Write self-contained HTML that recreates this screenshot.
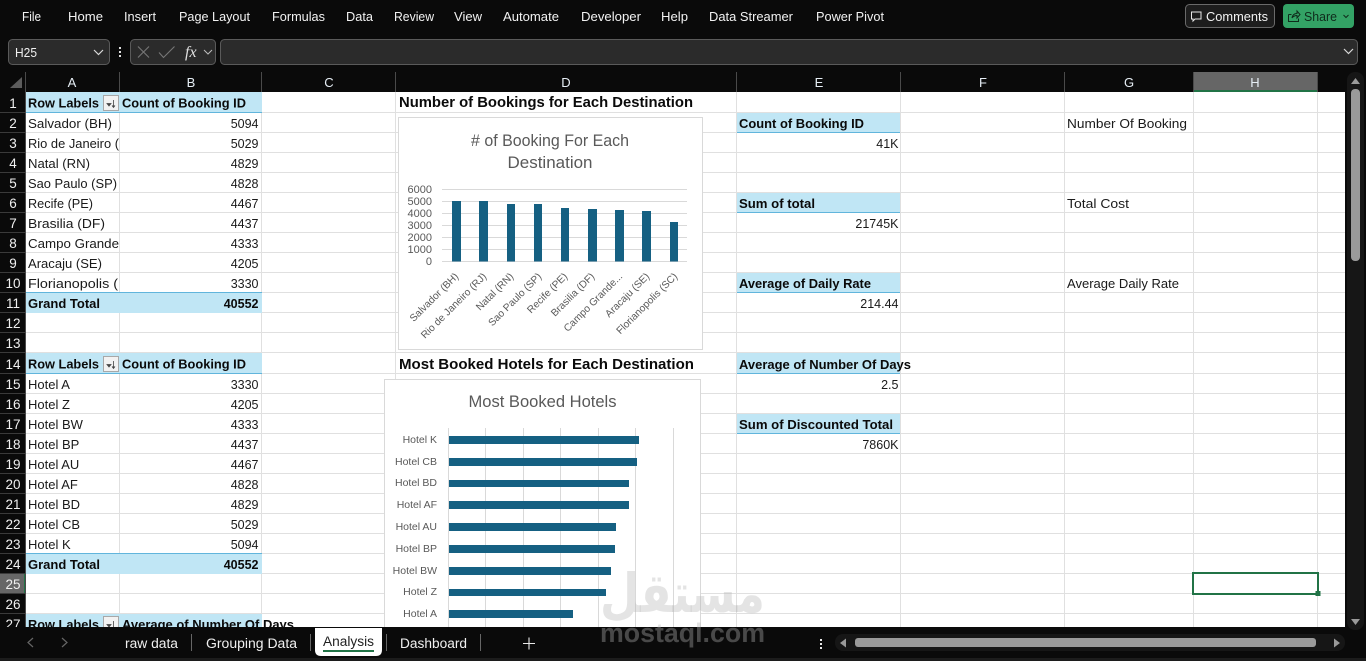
<!DOCTYPE html>
<html><head><meta charset="utf-8"><title>Analysis</title>
<style>
html,body{margin:0;padding:0;background:#0a0a0a;overflow:hidden;width:1366px;height:661px}
svg{display:block}
text{font-family:"Liberation Sans",sans-serif;white-space:pre}
.m{font-size:13px;fill:#f2f2f2}
.h{font-size:13px;fill:#e6eef5;text-anchor:middle}
.r{font-size:13.5px;fill:#f0f0f0;text-anchor:middle}
.c{font-size:13px;fill:#1a1a1a}
.n{font-size:12.5px;fill:#1a1a1a;text-anchor:end}
.b{font-size:13px;font-weight:bold;fill:#0a0a0a}
.be{font-size:12.5px;font-weight:bold;fill:#0a0a0a;text-anchor:end}
.t{font-size:14.5px;font-weight:bold;fill:#0a0a0a}
.ct{font-size:16.5px;fill:#595959;text-anchor:middle}
.ax{font-size:11px;fill:#595959;text-anchor:end}
.rl{font-size:10.2px;fill:#595959;text-anchor:end}
.hl{font-size:10.5px;fill:#595959;text-anchor:end}
.tab{font-size:13.5px;fill:#f0f0f0}
</style></head><body>
<svg width="1366" height="661" viewBox="0 0 1366 661" xmlns="http://www.w3.org/2000/svg">
<rect width="1366" height="661" fill="#0a0a0a"/>

<!-- ribbon tabs -->
<text class="m" x="22" y="21" textLength="19" lengthAdjust="spacingAndGlyphs">File</text>
<text class="m" x="68" y="21" textLength="35" lengthAdjust="spacingAndGlyphs">Home</text>
<text class="m" x="124" y="21" textLength="32" lengthAdjust="spacingAndGlyphs">Insert</text>
<text class="m" x="179" y="21" textLength="71" lengthAdjust="spacingAndGlyphs">Page Layout</text>
<text class="m" x="272" y="21" textLength="53" lengthAdjust="spacingAndGlyphs">Formulas</text>
<text class="m" x="346" y="21" textLength="27" lengthAdjust="spacingAndGlyphs">Data</text>
<text class="m" x="394" y="21" textLength="40" lengthAdjust="spacingAndGlyphs">Review</text>
<text class="m" x="454" y="21" textLength="28" lengthAdjust="spacingAndGlyphs">View</text>
<text class="m" x="503" y="21" textLength="56" lengthAdjust="spacingAndGlyphs">Automate</text>
<text class="m" x="581" y="21" textLength="60" lengthAdjust="spacingAndGlyphs">Developer</text>
<text class="m" x="661" y="21" textLength="27" lengthAdjust="spacingAndGlyphs">Help</text>
<text class="m" x="709" y="21" textLength="84" lengthAdjust="spacingAndGlyphs">Data Streamer</text>
<text class="m" x="816" y="21" textLength="68" lengthAdjust="spacingAndGlyphs">Power Pivot</text>

<!-- comments / share -->
<rect x="1185.500" y="4.500" width="89" height="23" rx="4" fill="#1d1d1d" stroke="#6a6a6a"/>
<path d="M1191.500 12h9.500v7h-6l-2 2v-2h-1.500z" fill="none" stroke="#e8e8e8" stroke-width="1"/>
<text class="m" x="1206" y="21" textLength="62" lengthAdjust="spacingAndGlyphs">Comments</text>
<rect x="1283" y="4" width="71" height="24" rx="4" fill="#33a265"/>
<path d="M1288.500 14.500v7h10v-3M1288.500 14.500h3M1292 18c.5-3 2.500-4.500 5-4.500v-2.500l3 3.500-3 3.500v-2.500c-2 0-3.500.5-5 2.500z" fill="none" stroke="#0f2b1b" stroke-width="1"/>
<text x="1304" y="21" style="font-size:13px;fill:#0f2b1b" textLength="33" lengthAdjust="spacingAndGlyphs">Share</text>
<path d="M1343.500 15l2.500 2.500 2.500-2.500" fill="none" stroke="#0f2b1b" stroke-width="1"/>

<!-- formula bar -->
<rect x="8.500" y="39.500" width="101" height="25" rx="4" fill="#2b2b2b" stroke="#5a5a5a"/>
<text x="15" y="57" style="font-size:13px;fill:#f0f0f0" textLength="22" lengthAdjust="spacingAndGlyphs">H25</text>
<path d="M94 50l4.500 4.500 4.500-4.500" fill="none" stroke="#d8d8d8" stroke-width="1.200"/>
<rect x="119" y="47" width="2" height="2" fill="#e0e0e0"/><rect x="119" y="51" width="2" height="2" fill="#e0e0e0"/><rect x="119" y="55" width="2" height="2" fill="#e0e0e0"/>
<rect x="130.500" y="39.500" width="85" height="25" rx="4" fill="#2b2b2b" stroke="#5a5a5a"/>
<path d="M138 46.500l11 11M149 46.500l-11 11" stroke="#777" stroke-width="1.100" fill="none"/>
<path d="M159 52.500l4.500 5 11-11" stroke="#777" stroke-width="1.100" fill="none"/>
<text x="185" y="57" style="font-family:'Liberation Serif',serif;font-style:italic;font-size:16px;fill:#e0e0e0">fx</text>
<path d="M204 50l4 4 4-4" fill="none" stroke="#bdbdbd" stroke-width="1"/>
<rect x="220.500" y="39.500" width="1137" height="25" rx="4" fill="#2b2b2b" stroke="#5a5a5a"/>
<path d="M1344 49l4.500 4.500 4.500-4.500" fill="none" stroke="#d8d8d8" stroke-width="1.200"/>

<!-- sheet -->
<rect x="26" y="92" width="1319" height="536" fill="#fff"/>

<!-- header selection -->
<rect x="1194" y="72" width="124" height="19" fill="#666"/>
<rect x="1194" y="90" width="124" height="2" fill="#217346"/>
<rect x="0" y="574" width="25" height="20" fill="#666"/>
<rect x="24" y="574" width="2" height="20" fill="#217346"/>

<!-- corner -->
<path d="M22 77v11h-12z" fill="#5c5c5c"/>

<!-- header separators -->
<path d="M25.500 72v556M119.500 72v20M261.500 72v20M395.500 72v20M736.500 72v20M900.500 72v20M1064.500 72v20M1193.500 72v20M1317.500 72v20" stroke="#4a4a4a" fill="none"/>
<path d="M0 112.500h25M0 132.500h25M0 152.500h25M0 172.500h25M0 192.500h25M0 212.500h25M0 232.500h25M0 252.500h25M0 272.500h25M0 292.500h25M0 312.500h25M0 332.500h25M0 352.500h25M0 373.500h25M0 393.500h25M0 413.500h25M0 433.500h25M0 453.500h25M0 473.500h25M0 493.500h25M0 513.500h25M0 533.500h25M0 553.500h25M0 573.500h25M0 593.500h25M0 613.500h25" stroke="#3a3a3a" fill="none"/>

<text class="h" x="72" y="87">A</text><text class="h" x="191" y="87">B</text><text class="h" x="329" y="87">C</text><text class="h" x="566" y="87">D</text><text class="h" x="819" y="87">E</text><text class="h" x="983" y="87">F</text><text class="h" x="1129" y="87">G</text><text class="h" x="1255" y="87">H</text>

<text class="r" x="13" y="108">1</text><text class="r" x="13" y="128">2</text><text class="r" x="13" y="148">3</text><text class="r" x="13" y="168">4</text><text class="r" x="13" y="188">5</text><text class="r" x="13" y="208">6</text><text class="r" x="13" y="228">7</text><text class="r" x="13" y="248">8</text><text class="r" x="13" y="268">9</text><text class="r" x="13" y="288">10</text><text class="r" x="13" y="308">11</text><text class="r" x="13" y="328">12</text><text class="r" x="13" y="348">13</text><text class="r" x="13" y="369">14</text><text class="r" x="13" y="389">15</text><text class="r" x="13" y="409">16</text><text class="r" x="13" y="429">17</text><text class="r" x="13" y="449">18</text><text class="r" x="13" y="469">19</text><text class="r" x="13" y="489">20</text><text class="r" x="13" y="509">21</text><text class="r" x="13" y="529">22</text><text class="r" x="13" y="549">23</text><text class="r" x="13" y="569">24</text><text class="r" x="13" y="589">25</text><text class="r" x="13" y="609">26</text><text class="r" x="13" y="629">27</text>

<!-- grid -->
<path d="M119.500 92v536M261.500 92v536M395.500 92v536M736.500 92v536M900.500 92v536M1064.500 92v536M1193.500 92v536M1317.500 92v536" stroke="#e0e0e0" fill="none"/>
<path d="M26 112.500h1319M26 132.500h1319M26 152.500h1319M26 172.500h1319M26 192.500h1319M26 212.500h1319M26 232.500h1319M26 252.500h1319M26 272.500h1319M26 292.500h1319M26 312.500h1319M26 332.500h1319M26 352.500h1319M26 373.500h1319M26 393.500h1319M26 413.500h1319M26 433.500h1319M26 453.500h1319M26 473.500h1319M26 493.500h1319M26 513.500h1319M26 533.500h1319M26 553.500h1319M26 573.500h1319M26 593.500h1319M26 613.500h1319" stroke="#e0e0e0" fill="none"/>

<!-- fills -->
<g fill="#c0e6f5">
<rect x="26" y="92" width="236" height="20"/>
<rect x="26" y="293" width="236" height="20"/>
<rect x="26" y="353" width="236" height="20"/>
<rect x="26" y="554" width="236" height="20"/>
<rect x="26" y="614" width="236" height="14"/>
<rect x="737" y="113" width="163" height="19"/>
<rect x="737" y="193" width="163" height="19"/>
<rect x="737" y="273" width="163" height="19"/>
<rect x="737" y="353" width="163" height="20"/>
<rect x="737" y="414" width="163" height="19"/>
</g>
<g fill="#61b5dc">
<rect x="26" y="112" width="236" height="1"/>
<rect x="26" y="292" width="236" height="1"/>
<rect x="26" y="373" width="236" height="1"/>
<rect x="26" y="553" width="236" height="1"/>
<rect x="737" y="132" width="163" height="1"/>
<rect x="737" y="212" width="163" height="1"/>
<rect x="737" y="292" width="163" height="1"/>
<rect x="737" y="373" width="163" height="1"/>
<rect x="737" y="433" width="163" height="1"/>
</g>

<!-- pivot 1 -->
<text class="b" x="28" y="107.500" textLength="71" lengthAdjust="spacingAndGlyphs">Row Labels</text>
<rect x="103.500" y="95.500" width="15" height="15" fill="#f2f2f2" stroke="#a8a8a8"/>
<path d="M107 103.500h4l-2 2.500zM113.500 100v7.500M112 105.500l1.500 2 1.500-2" fill="#444" stroke="#444" stroke-width=".8"/>
<text class="b" x="122" y="107.500" textLength="124" lengthAdjust="spacingAndGlyphs">Count of Booking ID</text>
<text class="c" x="28" y="128" textLength="84" lengthAdjust="spacingAndGlyphs">Salvador (BH)</text><text class="n" x="258.500" y="128">5094</text>
<text class="c" x="28" y="148" textLength="91" lengthAdjust="spacingAndGlyphs">Rio de Janeiro (</text><text class="n" x="258.500" y="148">5029</text>
<text class="c" x="28" y="168" textLength="62" lengthAdjust="spacingAndGlyphs">Natal (RN)</text><text class="n" x="258.500" y="168">4829</text>
<text class="c" x="28" y="188" textLength="89" lengthAdjust="spacingAndGlyphs">Sao Paulo (SP)</text><text class="n" x="258.500" y="188">4828</text>
<text class="c" x="28" y="208" textLength="65" lengthAdjust="spacingAndGlyphs">Recife (PE)</text><text class="n" x="258.500" y="208">4467</text>
<text class="c" x="28" y="228" textLength="77" lengthAdjust="spacingAndGlyphs">Brasilia (DF)</text><text class="n" x="258.500" y="228">4437</text>
<text class="c" x="28" y="248" textLength="91" lengthAdjust="spacingAndGlyphs">Campo Grande</text><text class="n" x="258.500" y="248">4333</text>
<text class="c" x="28" y="268" textLength="74" lengthAdjust="spacingAndGlyphs">Aracaju (SE)</text><text class="n" x="258.500" y="268">4205</text>
<text class="c" x="28" y="288" textLength="90" lengthAdjust="spacingAndGlyphs">Florianopolis (</text><text class="n" x="258.500" y="288">3330</text>
<text class="b" x="28" y="308" textLength="72" lengthAdjust="spacingAndGlyphs">Grand Total</text><text class="be" x="258.500" y="308">40552</text>

<!-- pivot 2 -->
<text class="b" x="28" y="368.500" textLength="71" lengthAdjust="spacingAndGlyphs">Row Labels</text>
<rect x="103.500" y="356.500" width="15" height="15" fill="#f2f2f2" stroke="#a8a8a8"/>
<path d="M107 364.500h4l-2 2.500zM113.500 361v7.500M112 366.500l1.500 2 1.500-2" fill="#444" stroke="#444" stroke-width=".8"/>
<text class="b" x="122" y="368.500" textLength="124" lengthAdjust="spacingAndGlyphs">Count of Booking ID</text>
<text class="c" x="28" y="389">Hotel A</text><text class="n" x="258.500" y="389">3330</text>
<text class="c" x="28" y="409">Hotel Z</text><text class="n" x="258.500" y="409">4205</text>
<text class="c" x="28" y="429">Hotel BW</text><text class="n" x="258.500" y="429">4333</text>
<text class="c" x="28" y="449">Hotel BP</text><text class="n" x="258.500" y="449">4437</text>
<text class="c" x="28" y="469">Hotel AU</text><text class="n" x="258.500" y="469">4467</text>
<text class="c" x="28" y="489">Hotel AF</text><text class="n" x="258.500" y="489">4828</text>
<text class="c" x="28" y="509">Hotel BD</text><text class="n" x="258.500" y="509">4829</text>
<text class="c" x="28" y="529">Hotel CB</text><text class="n" x="258.500" y="529">5029</text>
<text class="c" x="28" y="549">Hotel K</text><text class="n" x="258.500" y="549">5094</text>
<text class="b" x="28" y="569" textLength="72" lengthAdjust="spacingAndGlyphs">Grand Total</text><text class="be" x="258.500" y="569">40552</text>

<!-- pivot 3 -->
<text class="b" x="28" y="629" textLength="71" lengthAdjust="spacingAndGlyphs">Row Labels</text>
<rect x="103.500" y="616.500" width="15" height="15" fill="#f2f2f2" stroke="#a8a8a8"/>
<path d="M107 624.500h4l-2 2.500zM113.500 621v7" fill="#444" stroke="#444" stroke-width=".8"/>
<text class="b" x="122" y="629" textLength="172" lengthAdjust="spacingAndGlyphs">Average of Number Of Days</text>

<!-- headings -->
<text class="t" x="399" y="107" textLength="294" lengthAdjust="spacingAndGlyphs">Number of Bookings for Each Destination</text>
<text class="t" x="399" y="369" textLength="295" lengthAdjust="spacingAndGlyphs">Most Booked Hotels for Each Destination</text>

<!-- KPI -->
<text class="b" x="739" y="128" textLength="125" lengthAdjust="spacingAndGlyphs">Count of Booking ID</text><text class="n" x="898.500" y="148">41K</text>
<text class="b" x="739" y="208" textLength="76" lengthAdjust="spacingAndGlyphs">Sum of total</text><text class="n" x="898.500" y="228">21745K</text>
<text class="b" x="739" y="288" textLength="132" lengthAdjust="spacingAndGlyphs">Average of Daily Rate</text><text class="n" x="898.500" y="308">214.44</text>
<text class="b" x="739" y="369" textLength="172" lengthAdjust="spacingAndGlyphs">Average of Number Of Days</text><text class="n" x="898.500" y="389">2.5</text>
<text class="b" x="739" y="429" textLength="154" lengthAdjust="spacingAndGlyphs">Sum of Discounted Total</text><text class="n" x="898.500" y="449">7860K</text>
<text class="c" x="1067" y="128" textLength="120" lengthAdjust="spacingAndGlyphs">Number Of Booking</text>
<text class="c" x="1067" y="208" textLength="62" lengthAdjust="spacingAndGlyphs">Total Cost</text>
<text class="c" x="1067" y="288" textLength="112" lengthAdjust="spacingAndGlyphs">Average Daily Rate</text>

<!-- selection -->
<rect x="1193" y="573" width="125" height="21" fill="none" stroke="#217346" stroke-width="2"/>
<rect x="1315.500" y="591" width="5" height="5" fill="#217346"/>

<!-- chart 1 -->
<rect x="398.500" y="117.500" width="304" height="232" fill="#fff" stroke="#d9d9d9"/>
<text class="ct" x="550" y="146" textLength="158" lengthAdjust="spacingAndGlyphs">&#35; of Booking For Each</text>
<text class="ct" x="550" y="168" textLength="85" lengthAdjust="spacingAndGlyphs">Destination</text>
<path d="M442 189.500h245M442 201.500h245M442 213.500h245M442 225.500h245M442 237.500h245M442 249.500h245M442 261.500h245" stroke="#d9d9d9" fill="none"/>
<g fill="#156082">
<rect x="452" y="201" width="9" height="60.500"/><rect x="479" y="201" width="9" height="60.500"/><rect x="507" y="204" width="8" height="57.500"/><rect x="534" y="204" width="8" height="57.500"/><rect x="561" y="208" width="8" height="53.500"/><rect x="588" y="209" width="9" height="52.500"/><rect x="615" y="210" width="9" height="51.500"/><rect x="642" y="211" width="9" height="50.500"/><rect x="670" y="222" width="8" height="39.500"/>
</g>
<text class="ax" x="432" y="193">6000</text><text class="ax" x="432" y="205">5000</text><text class="ax" x="432" y="217">4000</text><text class="ax" x="432" y="229">3000</text><text class="ax" x="432" y="241">2000</text><text class="ax" x="432" y="253">1000</text><text class="ax" x="432" y="265">0</text>
<text class="rl" transform="translate(459,277) rotate(-45)">Salvador (BH)</text>
<text class="rl" transform="translate(487,277) rotate(-45)">Rio de Janeiro (RJ)</text>
<text class="rl" transform="translate(514,277) rotate(-45)">Natal (RN)</text>
<text class="rl" transform="translate(542,277) rotate(-45)">Sao Paulo (SP)</text>
<text class="rl" transform="translate(568,277) rotate(-45)">Recife (PE)</text>
<text class="rl" transform="translate(595,277) rotate(-45)">Brasilia (DF)</text>
<text class="rl" transform="translate(623,277) rotate(-45)">Campo Grande...</text>
<text class="rl" transform="translate(650,277) rotate(-45)">Aracaju (SE)</text>
<text class="rl" transform="translate(678,277) rotate(-45)">Florianopolis (SC)</text>

<!-- chart 2 -->
<rect x="384.500" y="379.500" width="316" height="260" fill="#fff" stroke="#d9d9d9"/>
<text class="ct" x="542.500" y="407" textLength="148" lengthAdjust="spacingAndGlyphs">Most Booked Hotels</text>
<path d="M448.500 428v200M485.500 428v200M523.500 428v200M560.500 428v200M598.500 428v200M635.500 428v200M673.500 428v200" stroke="#d9d9d9" fill="none"/>
<g fill="#156082">
<rect x="449" y="436" width="190" height="8"/><rect x="449" y="458" width="188" height="8"/><rect x="449" y="480" width="180" height="7"/><rect x="449" y="501" width="180" height="8"/><rect x="449" y="523" width="167" height="8"/><rect x="449" y="545" width="166" height="8"/><rect x="449" y="567" width="162" height="8"/><rect x="449" y="589" width="157" height="7"/><rect x="449" y="610" width="124" height="8"/>
</g>
<text class="hl" x="437" y="443">Hotel K</text>
<text class="hl" x="437" y="465">Hotel CB</text>
<text class="hl" x="437" y="486">Hotel BD</text>
<text class="hl" x="437" y="508">Hotel AF</text>
<text class="hl" x="437" y="530">Hotel AU</text>
<text class="hl" x="437" y="552">Hotel BP</text>
<text class="hl" x="437" y="574">Hotel BW</text>
<text class="hl" x="437" y="595">Hotel Z</text>
<text class="hl" x="437" y="617">Hotel A</text>

<!-- right of grid -->
<rect x="1345" y="66" width="21" height="595" fill="#0a0a0a"/>
<rect x="1347" y="72" width="17" height="558" rx="8" fill="#161616"/>
<path d="M1351 84l4.500-6 4.500 6z" fill="#9a9a9a"/>
<rect x="1351" y="89" width="9" height="172" rx="4" fill="#9a9a9a"/>
<path d="M1351 619l4.500 6 4.500-6z" fill="#9a9a9a"/>

<!-- bottom bar -->
<rect x="0" y="627" width="1345" height="34" fill="#0a0a0a"/>
<rect x="0" y="658" width="1366" height="3" fill="#1c1c1c"/>
<path d="M33 638l-5 4.500 5 4.500" stroke="#666" stroke-width="1.200" fill="none"/>
<path d="M62 638l5 4.500-5 4.500" stroke="#666" stroke-width="1.200" fill="none"/>
<text class="tab" x="125" y="648" textLength="53" lengthAdjust="spacingAndGlyphs">raw data</text>
<path d="M191.500 634v17M310.500 634v17M386.500 634v17M480.500 634v17" stroke="#666" fill="none"/>
<text class="tab" x="206" y="648" textLength="91" lengthAdjust="spacingAndGlyphs">Grouping Data</text>
<path d="M315 628v22q0 6 6 6h55q6 0 6-6v-22z" fill="#fff"/>
<text x="323" y="646" style="font-size:13.5px;fill:#1f1f1f" textLength="51" lengthAdjust="spacingAndGlyphs">Analysis</text>
<rect x="323" y="650" width="51" height="2" fill="#217346"/>
<text class="tab" x="400" y="648" textLength="67" lengthAdjust="spacingAndGlyphs">Dashboard</text>
<path d="M529 637.500v12M523 643.500h12" stroke="#e8e8e8" stroke-width="1.100" fill="none"/>
<rect x="820" y="639" width="2" height="2" fill="#e8e8e8"/><rect x="820" y="643" width="2" height="2" fill="#e8e8e8"/><rect x="820" y="647" width="2" height="2" fill="#e8e8e8"/>
<rect x="835" y="634" width="510" height="17" rx="8" fill="#161616"/>
<path d="M846 638.500v9l-6-4.500z" fill="#9a9a9a"/>
<rect x="855" y="638" width="461" height="9" rx="3" fill="#9a9a9a"/>
<path d="M1334 638.500v9l6-4.500z" fill="#9a9a9a"/>

<!-- watermark -->
<text x="765" y="612" textLength="165" lengthAdjust="spacingAndGlyphs" direction="rtl" style="font-family:'DejaVu Sans',sans-serif;font-weight:bold;font-size:54px;fill:rgba(183,183,183,.37)">مستقل</text>
<text x="600" y="642" textLength="165" lengthAdjust="spacingAndGlyphs" style="font-weight:bold;font-size:27px;fill:rgba(183,183,183,.37)">mostaql.com</text>
</svg>
</body></html>
